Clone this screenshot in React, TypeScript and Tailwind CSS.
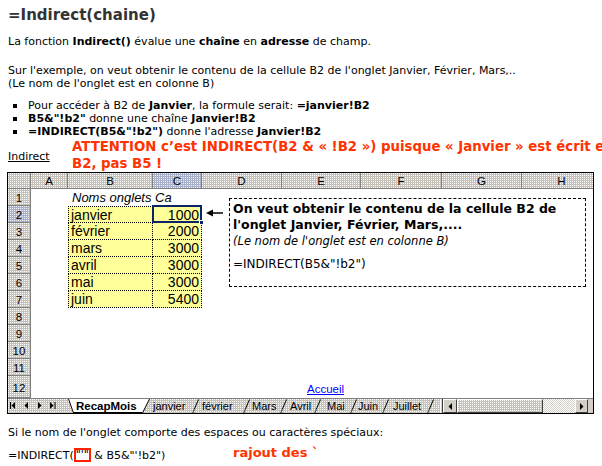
import React from 'react'

// dithered gray like the old excel gif
const dot = 'bg-[conic-gradient(at_1px_1px,#c6c2ba_75%,#ffffff_0)] bg-[length:2px_2px]'
const dotSel = 'bg-[conic-gradient(at_1px_1px,#a9b1c9_75%,#eef0f6_0)] bg-[length:2px_2px]'
const checker = 'bg-[conic-gradient(#ffffff_25%,#d4d0c8_0_50%,#ffffff_0_75%,#d4d0c8_0)] bg-[length:2px_2px]'
const raised = 'border-t border-l border-t-white border-l-white border-b border-r border-b-[#404040] border-r-[#404040]'

const cols = [
  { k: 'A', w: 'w-[37px]' },
  { k: 'B', w: 'w-[85px]' },
  { k: 'C', w: 'w-[49px]' },
  { k: 'D', w: 'w-[80px]' },
  { k: 'E', w: 'w-[79px]' },
  { k: 'F', w: 'w-[81px]' },
  { k: 'G', w: 'w-[80px]' },
  { k: 'H', w: 'w-[80px]' },
]

const mois = [
  ['janvier', '1000'],
  ['février', '2000'],
  ['mars', '3000'],
  ['avril', '3000'],
  ['mai', '3000'],
  ['juin', '5400'],
]

const tabs = [
  { label: 'janvier', w: 'w-[42px]', pl: 'pl-[3px]' },
  { label: 'février', w: 'w-[43px]', pl: 'pl-[2px]' },
  { label: 'Mars', w: 'w-[29px]', pl: 'pl-[1px]' },
  { label: 'Avril', w: 'w-[26px]', pl: 'pl-[2px]' },
  { label: 'Mai', w: 'w-[28px]', pl: 'pl-[5px]' },
  { label: 'Juin', w: 'w-[24px]', pl: 'pl-0' },
  { label: 'Juillet', w: 'w-[37px]', pl: 'pl-[3px]' },
]

function Bullet({ children }: { children: React.ReactNode }) {
  return (
    <li className="flex items-center">
      <span className="ml-[5px] mr-[11px] h-[4px] w-[4px] shrink-0 bg-black" />
      <span>{children}</span>
    </li>
  )
}

function Slash() {
  return (
    <svg width="8" height="15" viewBox="0 0 8 15" className="shrink-0">
      <path d="M0.5 14.5 L6.5 0.5" stroke="#000" strokeWidth="1" fill="none" />
      <path d="M2 14.5 Q1 12 2.5 10" stroke="#808080" strokeWidth="1" fill="none" />
    </svg>
  )
}

function Row({ n, sel, tall, children }: { n: number; sel?: boolean; tall?: boolean; children?: React.ReactNode }) {
  return (
    <div className={`flex ${tall ? 'h-[22px]' : 'h-[17px]'}`}>
      <div className={`w-[23px] shrink-0 border-r border-b border-[#808080] flex items-center justify-center pt-[2px] text-[11.5px] ${sel ? dotSel : dot}`}>
        {n}
      </div>
      {children}
    </div>
  )
}

function TabBar() {
  return (
    <div className={`flex h-[15px] border-t border-[#808080] ${dot} font-['Liberation_Sans',Arial,sans-serif] text-[11px] leading-[14px]`}>
      <svg width="60" height="14" viewBox="0 0 60 14" className="shrink-0">
        <rect x="2" y="3" width="1" height="7" fill="#000" />
        <polygon points="7,3 7,10 3.5,6.5" fill="#000" />
        <polygon points="20,3 20,10 16.5,6.5" fill="#000" />
        <polygon points="30,3 30,10 33.5,6.5" fill="#000" />
        <polygon points="42,3 42,10 45.5,6.5" fill="#000" />
        <rect x="46.5" y="3" width="1" height="7" fill="#000" />
      </svg>
      <div className="relative w-[82px] shrink-0">
        <div className="absolute inset-0 bg-white [clip-path:polygon(0_0,100%_0,calc(100%-8px)_100%,5px_100%)]" />
        <svg width="82" height="14" viewBox="0 0 82 14" className="absolute inset-0">
          <path d="M0.5 0 L5.5 14" stroke="#000" fill="none" />
          <path d="M74.5 14 L81.5 0" stroke="#000" fill="none" />
          <path d="M5 13.5 L74 13.5" stroke="#000" fill="none" />
        </svg>
        <span className="relative pl-[8px] font-bold text-[11.5px]">RecapMois</span>
      </div>
      {tabs.map(t => (
        <div key={t.label} className="flex shrink-0">
          <span className={`${t.w} ${t.pl} whitespace-nowrap`}>{t.label}</span>
          <Slash />
        </div>
      ))}
      <div className="w-[8px] shrink-0 flex justify-end">
        <div className="w-[3px] border-l border-white border-r border-r-[#404040] bg-[#d4d0c8]" />
      </div>
      <div className={`w-[14px] shrink-0 bg-[#d4d0c8] ${raised} flex items-center justify-center`}>
        <svg width="4" height="7" viewBox="0 0 4 7"><polygon points="4,0 4,7 0.5,3.5" fill="#000" /></svg>
      </div>
      <div className={`w-[86px] shrink-0 ${dot} ${raised}`} />
      <div className={`w-[32px] shrink-0 ${checker}`} />
      <div className={`w-[13px] shrink-0 bg-[#d4d0c8] ${raised} flex items-center justify-center`}>
        <svg width="4" height="7" viewBox="0 0 4 7"><polygon points="0,0 0,7 3.5,3.5" fill="#000" /></svg>
      </div>
      <div className="flex-1 bg-[#d4d0c8]" />
    </div>
  )
}

function Sheet() {
  const yellow = 'bg-[#ffff99] border-dotted border-black'
  return (
    <div className="relative -ml-px w-[587px] h-[242px] border border-black overflow-hidden bg-white font-['Liberation_Sans',Arial,sans-serif] text-[14px] leading-[16px]">
      <div className="flex h-[16px]">
        <div className={`w-[23px] shrink-0 border-r border-b border-[#808080] ${dot}`} />
        {cols.map(c => (
          <div
            key={c.k}
            className={`${c.w} shrink-0 border-r border-b border-[#808080] flex items-center justify-center text-[11.5px] ${c.k === 'C' ? dotSel : dot}`}
          >
            {c.k}
          </div>
        ))}
      </div>

      <Row n={1}>
        <div className="w-[37px] shrink-0" />
        <div className="w-[85px] shrink-0 pl-[4px] pt-[1px] text-[13px] italic whitespace-nowrap">Noms onglets</div>
        <div className="w-[49px] shrink-0 pl-[2px] pt-[1px] text-[13px] italic">Ca</div>
      </Row>
      {mois.map(([nom, ca], i) => (
        <Row key={nom} n={i + 2} sel={i === 0}>
          <div className="w-[37px] shrink-0" />
          <div className={`w-[85px] shrink-0 pl-[2px] flex items-center border-l border-r border-b ${i === 0 ? 'border-t' : ''} ${yellow}`}>
            {nom}
          </div>
          <div className={`w-[49px] shrink-0 pr-[2px] flex items-center justify-end border-r border-b ${i === 0 ? 'border-t' : ''} ${yellow}`}>
            {ca}
          </div>
        </Row>
      ))}
      {[8, 9, 10, 11].map(n => <Row key={n} n={n} />)}
      <Row n={12} tall>
        <div className="w-[274px] shrink-0" />
        <div className="flex items-end pb-[2px] pl-[2px] text-[11.5px] leading-[13px]">
          <a href="#" className="text-[#0000ff] underline">Accueil</a>
        </div>
      </Row>
      <TabBar />

      {/* selection C2 + poignée */}
      <div className="absolute left-[144px] top-[32px] h-[18px] w-[50px] border-2 border-[#0a246a]" />
      <div className="absolute left-[191px] top-[47px] h-[5px] w-[5px] bg-[#0a246a] border border-white" />

      {/* flèche */}
      <svg className="absolute left-[198px] top-[35px]" width="18" height="10" viewBox="0 0 18 10">
        <path d="M5 5 H17" stroke="#000" strokeWidth="1.5" />
        <polygon points="0,5 7,1.5 7,8.5" fill="#000" />
      </svg>

      {/* zone de texte */}
      <div className="absolute left-[221px] top-[25px] h-[89px] w-[357px] border border-dashed border-black bg-white pl-[3px] pt-[2px] font-['DejaVu_Sans',sans-serif] text-black">
        <p className="text-[12.5px] leading-[16px] font-bold">On veut obtenir le contenu de la cellule B2 de</p>
        <p className="text-[12.5px] leading-[16px] font-bold">l'onglet Janvier, Février, Mars,....</p>
        <p className="text-[11.5px] leading-[16px] italic">(Le nom de l'onglet est en colonne B)</p>
        <p className="mt-[7px] text-[12px] leading-[16px]">=INDIRECT(B5&amp;"!b2")</p>
      </div>
    </div>
  )
}

export default function App() {
  return (
    <div className="w-[602px] h-[466px] overflow-hidden bg-white pl-[8px] pt-[5px] text-[11px] leading-[13px] text-black font-['DejaVu_Sans',sans-serif]">
      <h1 className="text-[15px] leading-[20px] font-bold text-[#333333]">=Indirect(chaine)</h1>
      <p className="mt-[10px]">
        La fonction <b>Indirect()</b> évalue une <b>chaîne</b> en <b>adresse</b> de champ.
      </p>
      <p className="mt-[16px]">
        Sur l'exemple, on veut obtenir le contenu de la cellule B2 de l'onglet Janvier, Février, Mars,..
        <br />
        (Le nom de l'onglet est en colonne B)
      </p>
      <ul className="mt-[9px]">
        <Bullet>
          Pour accéder à B2 de <b>Janvier</b>, la formule serait: <b>=janvier!B2</b>
        </Bullet>
        <Bullet>
          <b>B5&amp;"!b2"</b> donne une chaîne <b>Janvier!B2</b>
        </Bullet>
        <Bullet>
          <b>=INDIRECT(B5&amp;"!b2")</b> donne l'adresse <b>Janvier!B2</b>
        </Bullet>
      </ul>
      <div className="flex">
        <a href="#" className="mt-[12px] w-[64px] shrink-0 underline">Indirect</a>
        <p className="whitespace-nowrap text-[13.3px] leading-[17px] font-bold text-[#ff3300]">
          ATTENTION c’est INDIRECT(B2 &amp; « !B2 ») puisque « Janvier » est écrit en
          <br />
          B2, pas B5 !
        </p>
      </div>

      <Sheet />

      <p className="mt-[12px]">Si le nom de l'onglet comporte des espaces ou caractères spéciaux:</p>
      <div className="mt-[9px] flex h-[14px] items-center">
        <div className="flex w-[225px] shrink-0 items-center">
          <span>=INDIRECT(</span>
          <span className="h-[14px] border-2 border-[#ff2200] leading-[10px]">"'"</span>
          <span className="whitespace-pre"> &amp; B5&amp;"'!b2")</span>
        </div>
        <span className="-mt-[6px] text-[13px] font-bold text-[#ff3300]">rajout des `</span>
      </div>
    </div>
  )
}
